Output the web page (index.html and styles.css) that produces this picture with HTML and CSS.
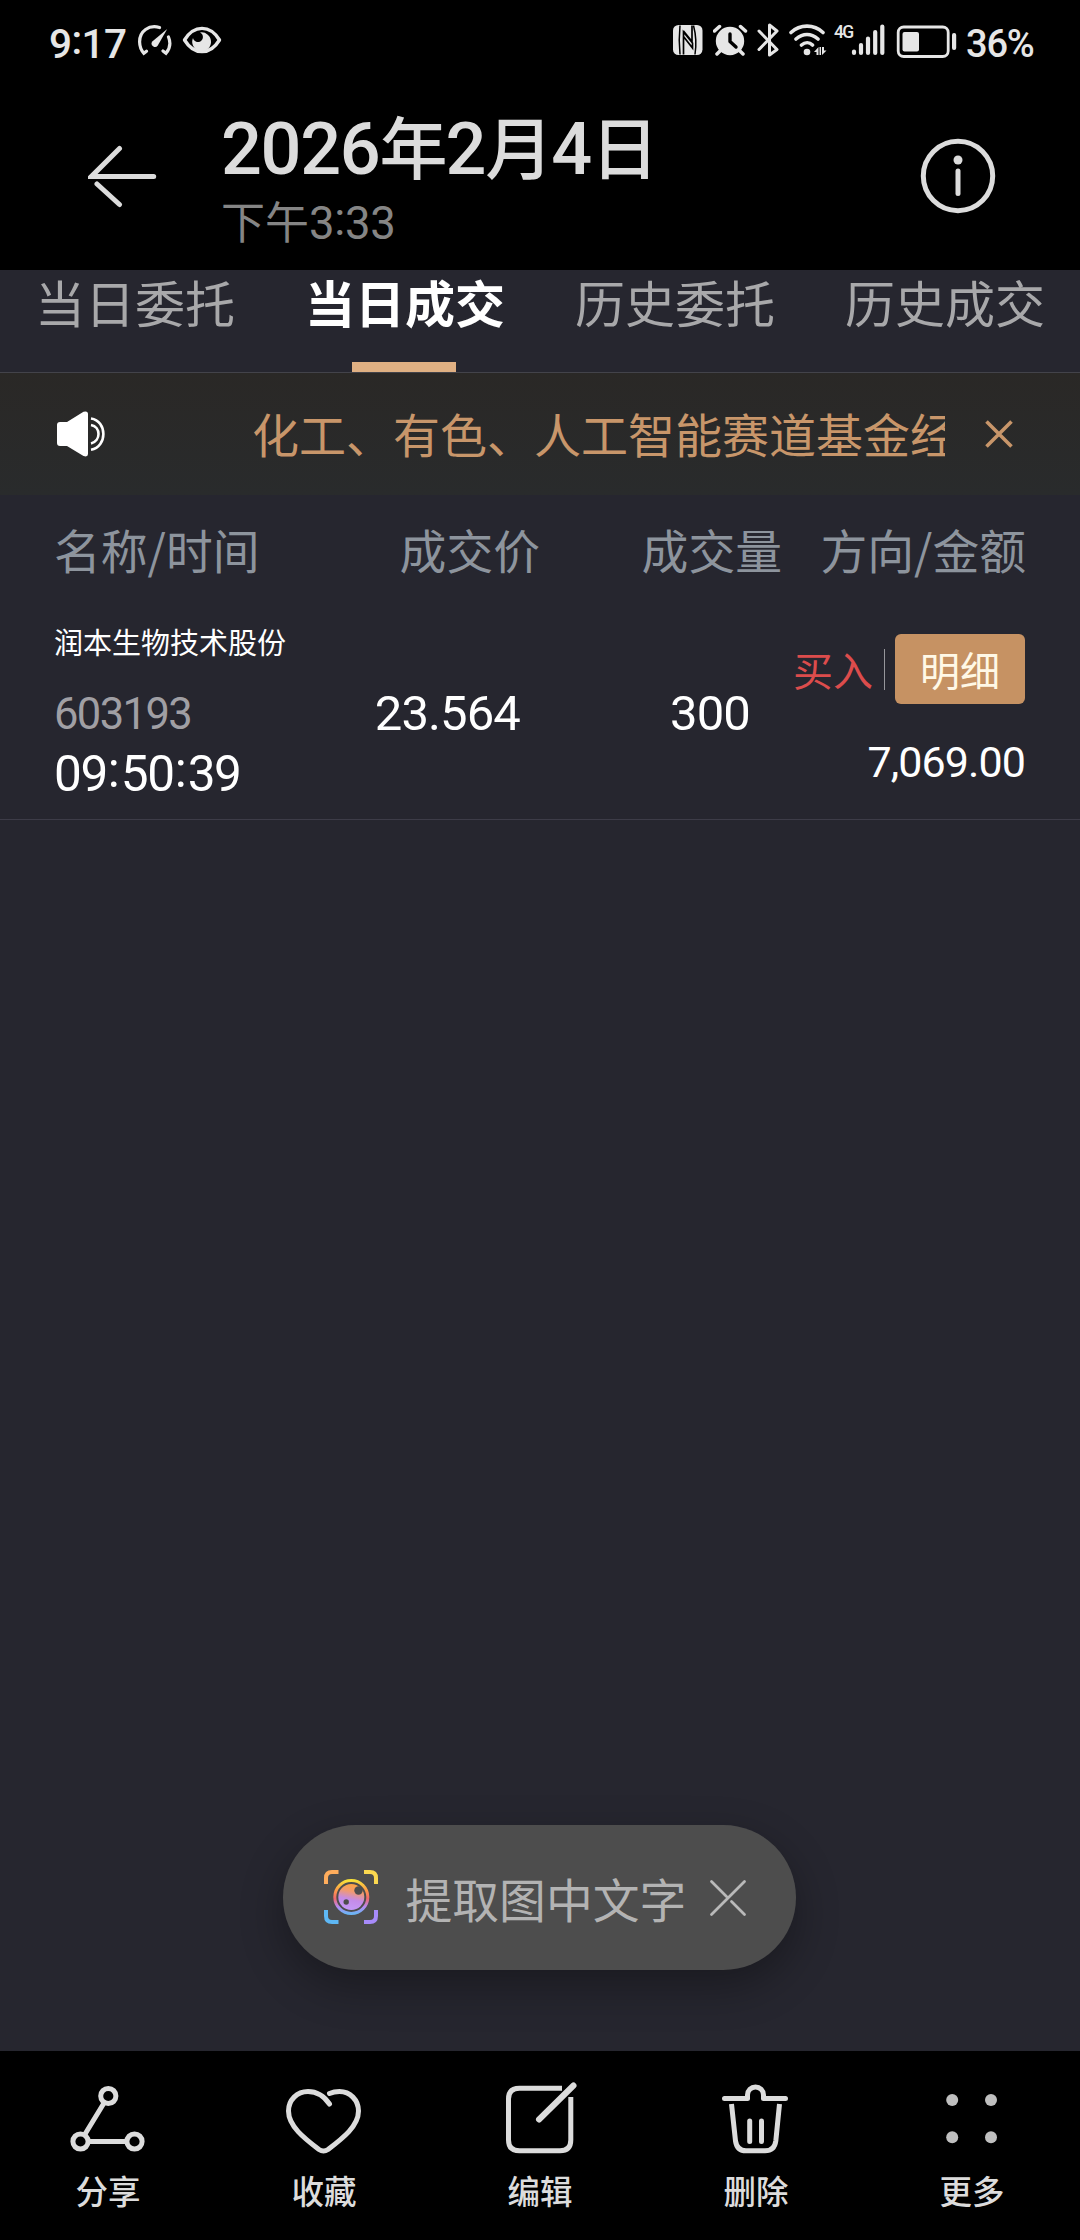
FILE: index.html
```html
<!DOCTYPE html>
<html lang="zh-CN">
<head>
<meta charset="utf-8">
<title>2026年2月4日</title>
<link rel="stylesheet" href="styles.css">
</head>
<body>
<div class="screen">
  <div class="statusbar">
    <div class="status-left">
      <span class="clock">9<span class="colon">:</span>17</span>
      <svg class="ic" width="34" height="32" viewBox="138 24 34 32" fill="none" stroke="#e6e6e6" stroke-width="3.2" stroke-linecap="round">
        <path d="M159.500 27.500 C149 24.500 139.500 31 139.600 42 C139.700 47 141 50 143.800 53.300 L146.500 51.200 M168.500 37 C171 43 170 48.500 166 53.300 L163 51"/>
        <path d="M167.200 29 L157.800 45.500 A3.400 3.400 0 1 1 152.300 41.500 Z" fill="#e6e6e6" stroke="none"/>
      </svg>
      <svg class="ic eye" width="40" height="28" viewBox="182 26 40 28">
        <path d="M184.500 40 C194 24.500 210 24.500 219.500 40 C210 55.500 194 55.500 184.500 40 Z" fill="none" stroke="#e6e6e6" stroke-width="3.400" stroke-linejoin="round"/>
        <path d="M200 32.500 A9.400 9.400 0 1 1 193 38 A5 5 0 1 0 200 32.500Z" fill="#e6e6e6"/>
      </svg>
    </div>
    <div class="status-right">
      <svg class="ic" width="31" height="32" viewBox="672 24 31 32">
        <rect x="673" y="25" width="29.500" height="30" rx="5.500" fill="#e6e6e6"/>
        <path d="M680 54.500 C679 45 679 35 680 25.500 M695 54.500 C696.500 45 696 35 693.500 25.500" stroke="#000" stroke-width="1.500" fill="none"/>
        <path d="M683.500 54.500 V32 L692.500 43 V48 L683.500 36.500 M692 25.500 V41.500 L683.500 31" stroke="#000" stroke-width="1.700" fill="none"/>
      </svg>
      <svg class="ic alarm" width="35" height="32" viewBox="713 24 35 32">
        <circle cx="730" cy="41" r="14.200" fill="#e6e6e6"/>
        <path d="M714.500 31 L719.500 26.500 M745.500 31 L740.500 26.500 M717 54 L720 51 M743 54 L740 51" stroke="#e6e6e6" stroke-width="3.500" stroke-linecap="round"/>
        <path d="M730 34 V41.500 L736 47" stroke="#000" stroke-width="3.400" stroke-linecap="round" stroke-linejoin="round" fill="none"/>
      </svg>
      <svg class="ic bt" width="23" height="36" viewBox="757 22 23 36">
        <path d="M759 31 L777 49.500 L769.500 55 V25 L777 31 L759 49.500" fill="none" stroke="#e6e6e6" stroke-width="3" stroke-linecap="round" stroke-linejoin="round"/>
      </svg>
      <svg class="ic wifi" width="39" height="34" viewBox="789 23 39 34">
        <path d="M791 32.500 C800 24 814 24 823 32.500 M796 39 C803 33 811 33 818 39 M801.500 45 C805 42 809.500 42 812.500 45" fill="none" stroke="#e6e6e6" stroke-width="3.600" stroke-linecap="round"/>
        <circle cx="807" cy="52" r="3.300" fill="#e6e6e6"/>
        <path d="M814 52 L818.500 47 V55 H816.500 V52Z M826.500 50.500 L822 55 V47 H824 V50.500Z M819.500 47H821V55H819.500Z" fill="#e6e6e6"/>
      </svg>
      <span class="net">4G</span>
      <svg class="ic" width="36" height="32" viewBox="850 24 36 32">
        <path d="M854 51.500V53 M861 45V53 M868 38.500V53 M875.200 32V53 M882.300 26.500V53" stroke="#e6e6e6" stroke-width="4.200" stroke-linecap="round"/>
      </svg>
      <svg class="ic batt" width="61" height="34" viewBox="896 25 61 34">
        <rect x="898.200" y="27" width="50" height="29.500" rx="5.500" fill="none" stroke="#e6e6e6" stroke-width="2.800"/>
        <rect x="902.500" y="32" width="16.500" height="19.500" rx="2" fill="#e6e6e6"/>
        <rect x="952" y="33" width="4.200" height="17" rx="2" fill="#e6e6e6"/>
      </svg>
      <span class="percent">36%</span>
    </div>
  </div>

  <div class="header">
    <svg class="back" width="70" height="64" viewBox="88 143 70 64" fill="none" stroke="#dcdcdc" stroke-width="5" stroke-linecap="round">
      <path d="M119.500 147.500 L91.500 175.400 H153.700"/>
      <path d="M97 183 L119.500 203.500"/>
    </svg>
    <div class="titles">
      <div class="title"><span class="tn">2026</span>年<span class="tn">2</span>月<span class="tn">4</span>日</div>
      <div class="subtitle">下午<span class="sn">3<span class="colon">:</span>33</span></div>
    </div>
    <svg class="info" width="76" height="76" viewBox="920.500 137.500 76 76">
      <circle cx="958.500" cy="175.500" r="34.700" fill="none" stroke="#dcdcdc" stroke-width="5"/>
      <circle cx="958.500" cy="159.500" r="4.500" fill="#dcdcdc"/>
      <path d="M958.500 170.500V193" stroke="#dcdcdc" stroke-width="5" stroke-linecap="round"/>
    </svg>
  </div>

  <div class="photo">
    <div class="tabs">
      <div class="tab">当日委托</div>
      <div class="tab active">当日成交</div>
      <div class="tab">历史委托</div>
      <div class="tab">历史成交</div>
    </div>
    <div class="notice">
      <svg class="speaker" width="50" height="48" viewBox="56 410 50 48">
        <path d="M60 422 H67 L83.500 411.800 Q88 410.500 88 414 V454 Q88 457.500 83.500 456 L67 446 H60 Q57 446 57 443 V425 Q57 422 60 422Z" fill="#fff"/>
        <path d="M91 418.500 C107.500 421 107.500 447 91 449.800 M91 425 C101 427 101 441 91 443.500" stroke="#fff" stroke-width="2.600" fill="none"/>
      </svg>
      <div class="marquee">化工、有色、人工智能赛道基金经</div>
      <svg class="notice-x" width="30" height="30" viewBox="984 419 30 30">
        <path d="M986.500 421.500 L1011.500 446.500 M1011.500 421.500 L986.500 446.500" stroke="#c8966a" stroke-width="3.600"/>
      </svg>
    </div>
    <div class="thead">
      <div>名称/时间</div><div>成交价</div><div>成交量</div><div>方向/金额</div>
    </div>
    <div class="trow">
      <div class="c-name">
        <div class="name">润本生物技术股份</div>
        <div class="code">603193</div>
        <div class="time">09<span class="colon">:</span>50<span class="colon">:</span>39</div>
      </div>
      <div class="c-num price">23.564</div>
      <div class="c-num vol">300</div>
      <div class="c-dir">
        <div class="dir-top"><span class="buy">买入</span><span class="sep"></span><span class="detail">明细</span></div>
        <div class="amount">7,069.00</div>
      </div>
    </div>
    <div class="blank">
      <div class="pill">
        <svg width="54" height="54" viewBox="0 0 54 54" fill="none">
          <defs>
            <linearGradient id="ring" x1="0" y1="0" x2="0" y2="1"><stop offset="0" stop-color="#f7e03a"/><stop offset=".3" stop-color="#ff9a4a"/><stop offset=".55" stop-color="#f0686e"/><stop offset=".8" stop-color="#b58af5"/><stop offset="1" stop-color="#6cb4f4"/></linearGradient>
            <linearGradient id="ball" x1=".6" y1="0" x2=".4" y2="1"><stop offset="0" stop-color="#ffa340"/><stop offset=".3" stop-color="#f09a72"/><stop offset=".6" stop-color="#c48be8"/><stop offset="1" stop-color="#c59af8"/></linearGradient>
          </defs>
          <path d="M2 14V8Q2 2 8 2H14.500" stroke="#ffad5c" stroke-width="4"/>
          <path d="M40 2H46Q52 2 52 8V14" stroke="#fbd850" stroke-width="4"/>
          <path d="M2 40V46Q2 52 8 52H14.500" stroke="#5eb8f5" stroke-width="4"/>
          <path d="M40 52H46Q52 52 52 46V40" stroke="#a78bfa" stroke-width="4"/>
          <circle cx="27.300" cy="27" r="16.500" stroke="url(#ring)" stroke-width="3"/>
          <circle cx="27.300" cy="27" r="13" fill="url(#ball)"/>
          <circle cx="34.500" cy="20.500" r="4.200" fill="#4d4d4d"/><circle cx="22.200" cy="32" r="2.700" fill="#4d4d4d"/>
        </svg>
        <span class="pill-text">提取图中文字</span>
        <svg class="pill-x" width="38" height="38" viewBox="709 1878 38 38" fill="none" stroke="#b9b9b9" stroke-width="2.800" stroke-linecap="round">
          <path d="M744.500 1880.500 L711.500 1913.500 M711.500 1880.500 L726.500 1895.500 M731.500 1900.500 L744.500 1913.500"/>
        </svg>
      </div>
    </div>
  </div>

  <div class="toolbar">
    <div class="tool">
      <svg width="80" height="80" viewBox="68 2080 80 80" fill="none" stroke="#dcdcdc" stroke-width="5">
        <circle cx="108.300" cy="2096" r="7.600"/><circle cx="80.500" cy="2141.500" r="7.600"/><circle cx="134.500" cy="2141.500" r="7.600"/>
        <path d="M104.300 2102.500 L84.500 2135 M88 2141.500H127"/>
      </svg>
      <span>分享</span>
    </div>
    <div class="tool">
      <svg width="80" height="80" viewBox="284 2080 80 80" fill="none" stroke="#dcdcdc" stroke-width="5" stroke-linecap="round" stroke-linejoin="round">
        <path d="M329.500 2104 C322 2093 314 2091.500 308 2091.500 C297 2091.500 288.500 2100 288.500 2111 C288.500 2126 304 2138 319 2149.500 Q323.500 2152.500 328 2149.500 C343 2138 358.500 2126 358.500 2111 C358.500 2100 350 2091.500 339.500 2091.500 Q334 2091.500 329.500 2093.500"/>
      </svg>
      <span>收藏</span>
    </div>
    <div class="tool">
      <svg width="80" height="80" viewBox="500 2080 80 80" fill="none" stroke="#dcdcdc" stroke-width="5">
        <path d="M562 2088.300 H519.500 Q508.500 2088.300 508.500 2099 V2140 Q508.500 2150.800 519.500 2150.800 H560 Q570.800 2150.800 570.800 2140 V2097"/>
        <path d="M539 2119.500 L573.500 2085.500" stroke-width="6" stroke-linecap="round"/>
      </svg>
      <span>编辑</span>
    </div>
    <div class="tool">
      <svg width="80" height="80" viewBox="716 2080 80 80" fill="none" stroke="#dcdcdc" stroke-width="5">
        <path d="M724.500 2098.500 H747.500 V2095 A8 8 0 0 1 763.500 2095 V2098.500 H785.500" stroke-linecap="round" stroke-linejoin="round"/>
        <path d="M731.500 2104 L735.500 2141 Q737 2150.800 746 2150.800 H765 Q774.500 2150.800 775.800 2141 L779.500 2104"/>
        <path d="M749.700 2121V2141.500 M761.500 2121V2141.500" stroke-linecap="round"/>
      </svg>
      <span>删除</span>
    </div>
    <div class="tool">
      <svg width="80" height="80" viewBox="932 2080 80 80" fill="#bfbfbf">
        <circle cx="952.200" cy="2100" r="6"/><circle cx="991" cy="2100" r="6"/><circle cx="952.200" cy="2137.200" r="6"/><circle cx="991" cy="2137.200" r="6"/>
      </svg>
      <span>更多</span>
    </div>
  </div>
</div>
</body>
</html>
```
FILE: styles.css
```css
* { box-sizing: border-box; }
body { margin: 0; background: #000; }
svg { display: block; flex: none; }
.screen {
  width: 1080px; height: 2240px; overflow: hidden;
  display: flex; flex-direction: column;
  background: #000; color: #dcdcdc;
  font-family: "Noto Sans CJK SC", sans-serif;
  white-space: nowrap;
}
.colon { vertical-align: 0.09em; line-height: 0; }

/* system status bar */
.statusbar { height: 84px; padding: 0 45px 0 49px; display: flex; justify-content: space-between; color: #e6e6e6; }
.status-left, .status-right { display: flex; align-items: center; height: 80px; }
.clock { font: 500 40.5px/80px Roboto, sans-serif; width: 89px; letter-spacing: -0.6px; padding-top: 7px; }
.eye { margin-left: 10px; }
.alarm { margin-left: 10px; }
.bt { margin-left: 9px; }
.wifi { margin-left: 9px; }
.net { font: 500 17.5px/20px Roboto, sans-serif; width: 22px; padding-left: 6px; margin-bottom: 16px; letter-spacing: -1.6px; }
.batt { margin: 3px 0 0 10px; }
.percent { font: 500 38px/80px Roboto, sans-serif; width: 78px; padding: 7px 0 0 9px; letter-spacing: -1.2px; }

/* photo viewer header */
.header { height: 186px; padding: 0 84px 0 88px; display: flex; }
.back { margin-top: 60px; }
.titles { margin-left: 63px; flex: 1; }
.title { font: 500 68px/92px Roboto, "Noto Sans CJK SC", sans-serif; letter-spacing: -2px; margin-top: 20px; }
.tn { font-size: 72px; letter-spacing: -1.3px; }
.subtitle { font: 400 44px/56px Roboto, "Noto Sans CJK SC", sans-serif; color: #858585; margin: -1px 0 0 0; }
.sn { font-size: 45.5px; letter-spacing: -0.3px; }
.info { margin-top: 54px; }

/* trade page shown in the photo */
.photo { flex: 1; display: flex; flex-direction: column; background: #26262f; }
.tabs { height: 103px; display: grid; grid-template-columns: repeat(4, 270px); border-bottom: 1px solid #43434a; }
.tab { display: flex; flex-direction: column; align-items: center; font-size: 50px; line-height: 62px; color: #a8a8aa; }
.tab.active { color: #fff; font-weight: 700; justify-content: space-between; }
.tab.active::after { content: ""; width: 104px; height: 10px; margin-right: 2px; background: #e0b083; }
.notice { height: 122px; padding: 0 66px 0 56px; display: flex; align-items: center; background: linear-gradient(#2a2826, #292b2c); }
.speaker { margin-bottom: 1px; }
.marquee { margin-left: 146px; width: 693px; overflow: hidden; font-size: 47px; line-height: 70px; margin-bottom: 2px; color: #c8966a; }
.notice-x { margin-left: auto; }
.thead, .trow { display: grid; grid-template-columns: 270px 216px 242px 244px; padding: 0 54px 0 54px; }
.thead { height: 111px; font-size: 46.8px; line-height: 107px; color: #8d949d; }
.thead > div:nth-child(n+2) { text-align: right; }
.trow { height: 214px; border-bottom: 1px solid #3d3c48; color: #fff; }
.name { font-size: 29px; line-height: 40px; margin-top: 15px; }
.code { font: 400 43.5px/54px Roboto, sans-serif; letter-spacing: -1.6px; color: #a09fa4; margin-top: 27px; }
.time { font: 400 49.5px/60px Roboto, sans-serif; letter-spacing: -1.4px; margin-top: 2px; }
.time .colon { letter-spacing: 1px; margin-left: 1px; }
.c-num { font: 400 49px/60px Roboto, sans-serif; letter-spacing: -0.9px; text-align: right; margin-top: 78px; }
.price { padding-right: 20px; }
.vol { padding-right: 32px; }
.c-dir { text-align: right; }
.dir-top { display: flex; align-items: center; justify-content: flex-end; margin: 28px 1px 0 0; height: 70px; font-size: 40px; line-height: 70px; }
.buy { color: #dc4c4c; }
.sep { width: 1px; height: 41px; background: #96969b; margin: 0 10px 0 11px; }
.detail { width: 130px; height: 70px; border-radius: 6px; background: #c69263; color: #fff8e6; text-align: center; }
.amount { font: 400 43px/54px Roboto, sans-serif; letter-spacing: -0.9px; margin: 31px 1px 0 0; }

.blank { flex: 1; display: flex; align-items: flex-end; justify-content: center; padding: 0 2px 81px 0; }
.pill { width: 513px; height: 145px; border-radius: 73px; background: #4d4d4d; box-shadow: 0 16px 44px rgba(0,0,0,.32); display: flex; align-items: center; padding: 0 49px 0 41px; color: #b3b3b3; }
.pill svg:first-child { margin-bottom: 1px; }
.pill-text { font-size: 46.800px; line-height: 70px; margin: 0 0 0 28px; }
.pill-x { margin-left: auto; }

.toolbar { height: 189px; display: grid; grid-template-columns: repeat(5, 1fr); }
.tool { display: flex; flex-direction: column; align-items: center; padding-top: 29px; font-size: 32.500px; line-height: 48px; font-weight: 500; }
.tool span { margin-top: 6px; }
```
